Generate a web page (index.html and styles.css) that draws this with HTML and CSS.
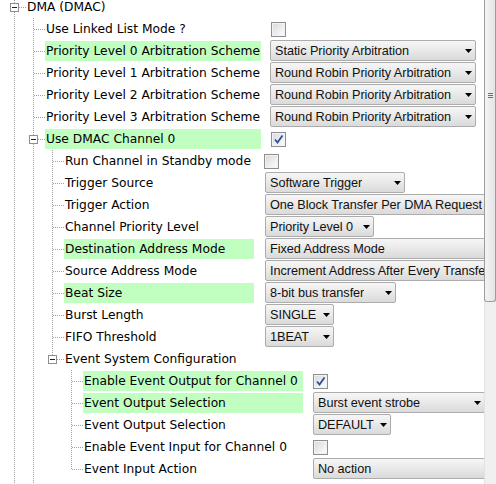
FILE: index.html
```html
<!DOCTYPE html>
<html>
<head>
<meta charset="utf-8">
<title>DMA (DMAC)</title>
<link rel="stylesheet" href="styles.css">
</head>
<body>
<div class="panel">
  <div class="tree">
    <div class="group root">
      <div class="cell">
        <span class="conn"><span class="exp"></span></span><span class="label">DMA (DMAC)</span>
      </div>
      <div class="group l1 sub cont">
        <div class="cell"><span class="conn"></span><span class="label">Use Linked List Mode ?</span></div>
        <div class="val"><span class="chk chk-l1"></span></div>

        <div class="cell"><span class="conn"></span><span class="label hl">Priority Level 0 Arbitration Scheme</span></div>
        <div class="val"><div class="combo combo-l1"><span class="txt">Static Priority Arbitration</span><svg width="7" height="4" viewBox="0 0 7 4"><path d="M0 0H7L3.5 4Z"/></svg></div></div>

        <div class="cell"><span class="conn"></span><span class="label">Priority Level 1 Arbitration Scheme</span></div>
        <div class="val"><div class="combo combo-l1"><span class="txt">Round Robin Priority Arbitration</span><svg width="7" height="4" viewBox="0 0 7 4"><path d="M0 0H7L3.5 4Z"/></svg></div></div>

        <div class="cell"><span class="conn"></span><span class="label">Priority Level 2 Arbitration Scheme</span></div>
        <div class="val"><div class="combo combo-l1"><span class="txt">Round Robin Priority Arbitration</span><svg width="7" height="4" viewBox="0 0 7 4"><path d="M0 0H7L3.5 4Z"/></svg></div></div>

        <div class="cell"><span class="conn"></span><span class="label">Priority Level 3 Arbitration Scheme</span></div>
        <div class="val"><div class="combo combo-l1"><span class="txt">Round Robin Priority Arbitration</span><svg width="7" height="4" viewBox="0 0 7 4"><path d="M0 0H7L3.5 4Z"/></svg></div></div>

        <div class="cell"><span class="conn"><span class="exp"></span></span><span class="label hl">Use DMAC Channel 0</span></div>
        <div class="val"><span class="chk chk-l1 on"><svg width="11" height="11" viewBox="0 0 11 11"><path d="M2 5.5L4.5 8.5L9.5 1.5" fill="none" stroke="#2c4f9e" stroke-width="1.8"/></svg></span></div>

        <div class="group l2 sub cont">
          <div class="cell"><span class="conn"></span><span class="label">Run Channel in Standby mode</span></div>
          <div class="val"><span class="chk chk-l2"></span></div>

          <div class="cell"><span class="conn"></span><span class="label">Trigger Source</span></div>
          <div class="val"><div class="combo w-140"><span class="txt">Software Trigger</span><svg width="7" height="4" viewBox="0 0 7 4"><path d="M0 0H7L3.5 4Z"/></svg></div></div>

          <div class="cell"><span class="conn"></span><span class="label">Trigger Action</span></div>
          <div class="val"><div class="combo w-250"><span class="txt">One Block Transfer Per DMA Request</span><svg width="7" height="4" viewBox="0 0 7 4"><path d="M0 0H7L3.5 4Z"/></svg></div></div>

          <div class="cell"><span class="conn"></span><span class="label">Channel Priority Level</span></div>
          <div class="val"><div class="combo w-109"><span class="txt">Priority Level 0</span><svg width="7" height="4" viewBox="0 0 7 4"><path d="M0 0H7L3.5 4Z"/></svg></div></div>

          <div class="cell"><span class="conn"></span><span class="label hl">Destination Address Mode</span></div>
          <div class="val"><div class="combo w-260"><span class="txt">Fixed Address Mode</span><svg width="7" height="4" viewBox="0 0 7 4"><path d="M0 0H7L3.5 4Z"/></svg></div></div>

          <div class="cell"><span class="conn"></span><span class="label">Source Address Mode</span></div>
          <div class="val"><div class="combo w-260"><span class="txt">Increment Address After Every Transfer</span><svg width="7" height="4" viewBox="0 0 7 4"><path d="M0 0H7L3.5 4Z"/></svg></div></div>

          <div class="cell"><span class="conn"></span><span class="label hl">Beat Size</span></div>
          <div class="val"><div class="combo w-131"><span class="txt">8-bit bus transfer</span><svg width="7" height="4" viewBox="0 0 7 4"><path d="M0 0H7L3.5 4Z"/></svg></div></div>

          <div class="cell"><span class="conn"></span><span class="label">Burst Length</span></div>
          <div class="val"><div class="combo w-69"><span class="txt">SINGLE</span><svg width="7" height="4" viewBox="0 0 7 4"><path d="M0 0H7L3.5 4Z"/></svg></div></div>

          <div class="cell"><span class="conn"></span><span class="label">FIFO Threshold</span></div>
          <div class="val"><div class="combo w-69"><span class="txt">1BEAT</span><svg width="7" height="4" viewBox="0 0 7 4"><path d="M0 0H7L3.5 4Z"/></svg></div></div>

          <div class="cell"><span class="conn end"><span class="exp"></span></span><span class="label">Event System Configuration</span></div>
          <div class="val"></div>

          <div class="group l3 sub">
            <div class="cell"><span class="conn"></span><span class="label hl">Enable Event Output for Channel 0</span></div>
            <div class="val"><span class="chk on"><svg width="11" height="11" viewBox="0 0 11 11"><path d="M2 5.5L4.5 8.5L9.5 1.5" fill="none" stroke="#2c4f9e" stroke-width="1.8"/></svg></span></div>

            <div class="cell"><span class="conn"></span><span class="label hl">Event Output Selection</span></div>
            <div class="val"><div class="combo w-172"><span class="txt">Burst event strobe</span><svg width="7" height="4" viewBox="0 0 7 4"><path d="M0 0H7L3.5 4Z"/></svg></div></div>

            <div class="cell"><span class="conn"></span><span class="label">Event Output Selection</span></div>
            <div class="val"><div class="combo w-78"><span class="txt">DEFAULT</span><svg width="7" height="4" viewBox="0 0 7 4"><path d="M0 0H7L3.5 4Z"/></svg></div></div>

            <div class="cell"><span class="conn"></span><span class="label">Enable Event Input for Channel 0</span></div>
            <div class="val"><span class="chk"></span></div>

            <div class="cell"><span class="conn end"></span><span class="label">Event Input Action</span></div>
            <div class="val"><div class="combo w-190"><span class="txt">No action</span><svg width="7" height="4" viewBox="0 0 7 4"><path d="M0 0H7L3.5 4Z"/></svg></div></div>
          </div>
        </div>

        <div class="cell"><span class="conn"><span class="exp"></span></span><span class="label">Use DMAC Channel 1</span></div>
        <div class="val"><span class="chk chk-l1"></span></div>
      </div>
    </div>
  </div>
  <div class="scroll">
    <div class="thumb"><span class="grip"></span></div>
  </div>
</div>
</body>
</html>
```

FILE: styles.css
```css
* { box-sizing: border-box; }
html, body { margin: 0; padding: 0; }
body {
  width: 496px;
  height: 484px;
  overflow: hidden;
  background: #fff;
  font-family: "DejaVu Sans", Verdana, sans-serif;
  font-size: 12.25px;
  color: #000;
}
.panel { display: flex; height: 484px; }
.tree { flex: 1; min-width: 0; overflow: hidden; padding-left: 10px; }
.tree > .root { margin-top: -4px; }

.group { display: grid; grid-template-columns: auto 1fr; }
.group.l1 { grid-template-columns: 232px 1fr; column-gap: 9px; }
.group.l2 { grid-template-columns: 206px 1fr; column-gap: 11px; }
.group.l3 { grid-template-columns: 236px 1fr; column-gap: 10px; }
.sub { grid-column: 1 / -1; padding-left: 19px; }
.sub.cont {
  background: repeating-linear-gradient(#a0a0a0 0 1px, transparent 1px 2px) 4px 0 / 1px 100% no-repeat;
}

.cell { display: flex; align-items: center; height: 22px; min-width: 0; }
.conn {
  flex: 0 0 16px;
  height: 22px;
  display: flex;
  align-items: center;
  background:
    repeating-linear-gradient(to right, #a0a0a0 0 1px, transparent 1px 2px) 5px 11px / 11px 1px no-repeat,
    repeating-linear-gradient(#a0a0a0 0 1px, transparent 1px 2px) 4px 0 / 1px 22px no-repeat;
}
.conn.end { background-size: 11px 1px, 1px 12px; }
.exp {
  width: 9px;
  height: 9px;
  border: 1px solid #8f8f8f;
  background: #fff;
  display: flex;
  align-items: center;
  justify-content: center;
  margin-top: 1px;
}
.exp::after { content: ""; width: 5px; height: 1px; background: #222; }
.label {
  flex: 1;
  min-width: 0;
  height: 20px;
  line-height: 20px;
  padding: 0 1px;
  white-space: nowrap;
  overflow: hidden;
}
.hl { background: #c0ffc0; }

.val { height: 22px; display: flex; align-items: center; min-width: 0; }

.chk {
  flex: none;
  width: 15px;
  height: 15px;
  border: 1px solid #8e8f8f;
  background: linear-gradient(135deg, #d8d8d8, #f7f7f7 80%);
  box-shadow: inset 0 0 0 1px #f2f2f2;
  display: flex;
  align-items: center;
  justify-content: center;
}
.chk-l1 { margin-left: 1px; }
.chk-l2 { margin-left: -1px; }

.combo {
  flex: none;
  align-self: flex-start;
  height: 21px;
  display: flex;
  align-items: center;
  justify-content: space-between;
  padding: 0 3px 0 4px;
  border: 1px solid #acacac;
  border-radius: 2px;
  background: linear-gradient(#f6f6f6, #e9e9e9 50%, #dadada);
  font-family: "Liberation Sans", Arial, sans-serif;
  font-size: 12.7px;
  letter-spacing: -0.05px;
  color: #111;
}
.combo .txt { flex: 0 1 auto; min-width: 0; white-space: nowrap; overflow: hidden; }
.combo svg { flex: none; margin-left: 3px; fill: #000; }
.combo-l1 { width: 206px; }
.w-69 { width: 69px; }
.w-78 { width: 78px; }
.w-109 { width: 109px; }
.w-131 { width: 131px; }
.w-140 { width: 140px; }
.w-172 { width: 172px; }
.w-190 { width: 190px; }
.w-250 { width: 250px; }
.w-260 { width: 260px; }

.scroll {
  flex: 0 0 12px;
  background: #f0f0f0;
  border-left: 1px solid #e2e2e2;
}
.thumb {
  height: 302px;
  margin-left: -1px;
  border: 1px solid #9c9c9c;
  border-top: none;
  border-radius: 0 0 3px 3px;
  background: linear-gradient(to right, #f4f4f4, #e4e4e4);
  display: flex;
  justify-content: center;
  padding-top: 93px;
}
.grip {
  width: 5px;
  height: 5px;
  background: repeating-linear-gradient(#6e6e6e 0 1px, transparent 1px 2px);
}
```
